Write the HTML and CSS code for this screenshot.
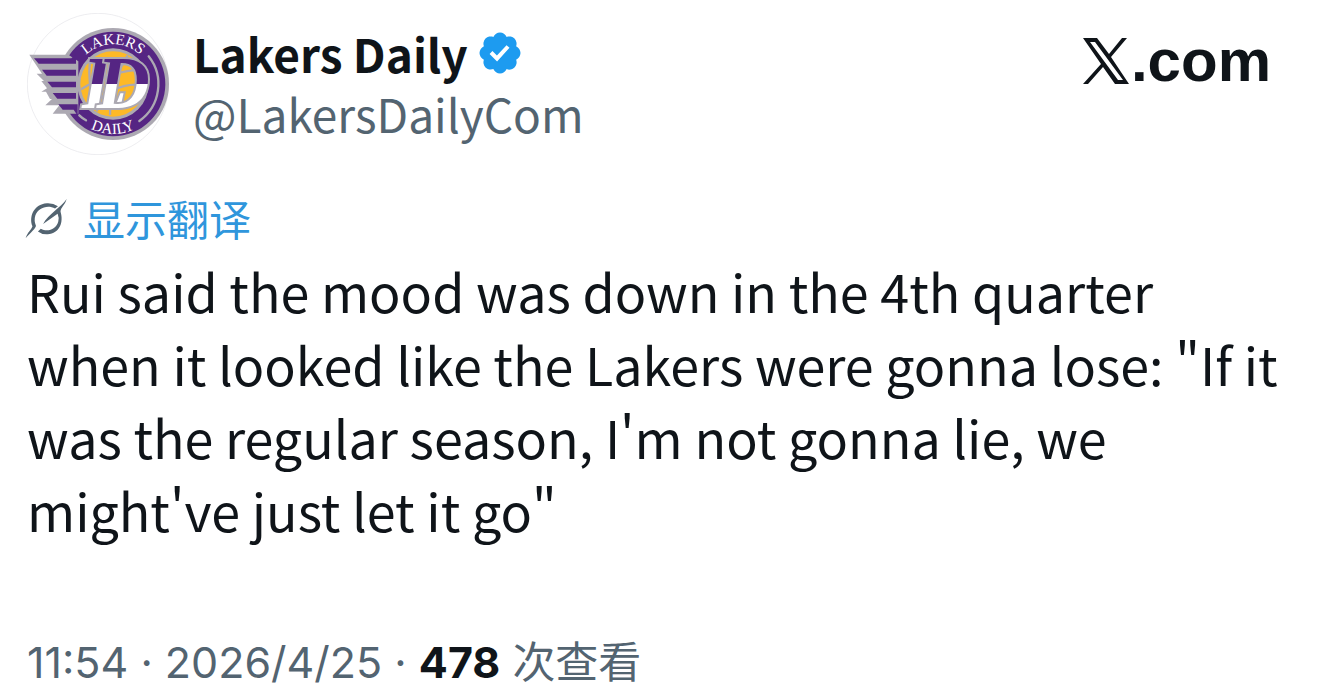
FILE: index.html
```
<!DOCTYPE html>
<html lang="zh-CN">
<head>
  <meta charset="UTF-8">
  <meta name="viewport" content="width=device-width, initial-scale=1">
  <title>Lakers Daily</title>
  <link rel="stylesheet" href="styles.css">
</head>
<body>

  <article class="post">
    <header class="post-header">
      <svg class="avatar" viewBox="21 24 426 426" role="img" aria-label="Lakers Daily">
        <defs>
          <clipPath id="ballClip"><circle cx="279" cy="237" r="97"/></clipPath>
          <linearGradient id="split" gradientUnits="userSpaceOnUse" x1="0" y1="160" x2="0" y2="310">
            <stop offset="0.52" stop-color="#552583"/>
            <stop offset="0.52" stop-color="#fff"/>
          </linearGradient>
          <path id="arcTop" d="M160 237a119 119 0 0 1 238 0"/>
          <path id="arcBottom" d="M129 237a150 150 0 0 0 300 0"/>
        </defs>
        <circle cx="234" cy="237" r="212" fill="#fff" stroke="#e4e4e8" stroke-width="2"/>
        <circle cx="279" cy="237" r="168" fill="#aca9b2"/>
        <circle cx="279" cy="237" r="157" fill="#552583"/>
        <!-- speed stripes -->
        <path fill="#fff" d="M100 186h40v130l-20 30h-20z"/>
        <path fill="#aca9b2" d="M28 149h117l30 20v157H98l20-25H76l20-19H90l-12-22h-14l17-10-17-22h8l-22-22h16z"/>
        <path fill="#552583" d="M42 160h112l14-12v28H56zM66 194h102v18H80zM82 230h86v17H96zM98 264h70v17H112zM115 298h58v34l-12-18H128z"/>
        <!-- ball -->
        <circle cx="279" cy="237" r="107" fill="#aca9b2"/>
        <circle cx="279" cy="237" r="98" fill="#fdb927"/>
        <g clip-path="url(#ballClip)" fill="none" stroke="#aca9b2" stroke-width="7">
          <path d="M180 255q90-60 200-62M206 310q90-90 178-66M212 160q-14 70 20 160M330 140q-60 90-60 190"/>
        </g>
        <path fill="none" stroke="#aca9b2" stroke-width="7" stroke-linecap="round" d="M386 154a135 135 0 0 1-28 194M178 331q9 9 20 15"/>
        <g class="seal-text">
          <text><textPath href="#arcTop" startOffset="50%" text-anchor="middle">LAKERS</textPath></text>
          <text><textPath href="#arcBottom" startOffset="50%" text-anchor="middle">DAILY</textPath></text>
        </g>
        <g class="monogram" fill="url(#split)">
          <text x="186" y="308">L</text>
          <text x="230" y="308">D</text>
        </g>
      </svg>

      <div class="author">
        <div class="name-row">
          <span class="name">Lakers Daily</span>
          <svg class="verified" viewBox="0 0 22 22" role="img" aria-label="认证账号">
            <path d="M20.396 11c-.018-.646-.215-1.275-.57-1.816-.354-.54-.852-.972-1.438-1.246.223-.607.27-1.264.14-1.897-.131-.634-.437-1.218-.882-1.687-.47-.445-1.053-.75-1.687-.882-.633-.13-1.29-.083-1.897.14-.273-.587-.704-1.086-1.245-1.44S11.647 1.62 11 1.604c-.646.017-1.273.213-1.813.568s-.969.854-1.24 1.44c-.608-.223-1.267-.272-1.902-.14-.635.13-1.22.436-1.69.882-.445.47-.749 1.055-.878 1.688-.13.633-.08 1.29.144 1.896-.587.274-1.087.705-1.443 1.245-.356.54-.555 1.17-.574 1.817.02.647.218 1.276.574 1.817.356.54.856.972 1.443 1.245-.224.606-.274 1.263-.144 1.896.13.634.433 1.218.877 1.688.47.443 1.054.747 1.687.878.633.132 1.29.084 1.897-.136.274.586.705 1.084 1.246 1.439.54.354 1.17.551 1.816.569.647-.016 1.276-.213 1.817-.567s.972-.854 1.245-1.44c.604.239 1.266.296 1.903.164.636-.132 1.22-.447 1.68-.907.46-.46.776-1.044.908-1.681s.075-1.299-.165-1.903c.586-.274 1.084-.705 1.439-1.246.354-.54.551-1.17.569-1.816zM9.662 14.85l-3.429-3.428 1.293-1.302 2.072 2.072 4.4-4.794 1.347 1.246z"/>
          </svg>
        </div>
        <div class="handle">@LakersDailyCom</div>
      </div>

      <a href="#" class="site">
        <svg class="site-logo" viewBox="0 0 46 46" aria-hidden="true">
          <path fill-rule="evenodd" d="M0 0h14l12 16L39 0h5L28 19l18 27H32L20 29 5 46H0l18-20zM7 4l28 38h5L12 4z"/>
        </svg>
        <span>.com</span>
      </a>
    </header>

    <button type="button" class="translate">
      <svg class="translate-icon" viewBox="28 25 130 124" aria-hidden="true">
        <path d="M30 148C36 128 48 123 51 111C40 84 53 43 96 40Q115 39 130 49L121 56C97 43 67 55 60 78Q55 94 62 110C56 124 42 133 30 148z"/>
        <path d="M157 27C152 45 138 54 138 66C148 98 136 133 98 136Q81 137 68 127L77 119C99 131 125 119 131 96Q134 84 129 72L84 104C101 73 138 54 157 27z"/>
      </svg>
      显示翻译
    </button>

    <p class="post-text">Rui said the mood was down in the 4th quarter when it looked like the Lakers were gonna lose: "If it was the regular season, I'm not gonna lie, we might've just let it go"</p>

    <footer class="post-meta">
      <time datetime="2026-04-25T11:54">11:54 · 2026/4/25</time> · <strong>478</strong> 次查看
    </footer>
  </article>

</body>
</html>
```
FILE: styles.css
```
body {
  margin: 0;
  background: #fff;
  color: #0f1419;
  font-family: "Noto Sans CJK SC", sans-serif;
}

.post {
  box-sizing: border-box;
  min-height: 100vh;
  padding: 13px 40px 0 27px;
}

.post-header {
  display: flex;
  align-items: flex-start;
  padding-right: 9px;
}

.avatar {
  width: 142px;
  height: 142px;
  flex-shrink: 0;
}

.seal-text {
  fill: #fff;
  font: 46px "Liberation Serif", serif;
}

.monogram {
  font: italic bold 220px "Liberation Serif", serif;
  stroke: #aca9b2;
  stroke-width: 12px;
  paint-order: stroke;
}

.author {
  margin-left: 24px;
  padding-top: 10px;
}

.name-row {
  display: flex;
  align-items: center;
  gap: 8px;
  line-height: 60px;
}

.name {
  font-size: 46px;
  font-weight: bold;
}

.verified {
  width: 48px;
  height: 48px;
  fill: #1d9bf0;
}

.handle {
  color: #536471;
  font-size: 46px;
  line-height: 60px;
}

.site {
  display: flex;
  align-items: center;
  gap: 2px;
  margin-left: auto;
  padding-top: 16px;
  color: #0f1419;
  font: bold 60px/64px "Liberation Sans", sans-serif;
  text-decoration: none;
}

.site-logo {
  width: 46px;
  height: 46px;
  fill: #0f1419;
}

.translate {
  display: flex;
  align-items: center;
  gap: 16px;
  margin: 33px 0 0 -2px;
  padding: 0;
  border: none;
  background: none;
  color: #2f96dc;
  font: 42px/60px "Noto Sans CJK SC", sans-serif;
  cursor: pointer;
}

.translate-icon {
  width: 42px;
  height: 41px;
  fill: #536471;
}

.post-text {
  margin: 6px 0 0;
  font-size: 52px;
  line-height: 73px;
}

.post-meta {
  margin-top: 86px;
  color: #536471;
  font-family: Inter, "Noto Sans CJK SC", sans-serif;
  font-size: 43px;
  line-height: 60px;
}

.post-meta strong {
  color: #0f1419;
}
```
